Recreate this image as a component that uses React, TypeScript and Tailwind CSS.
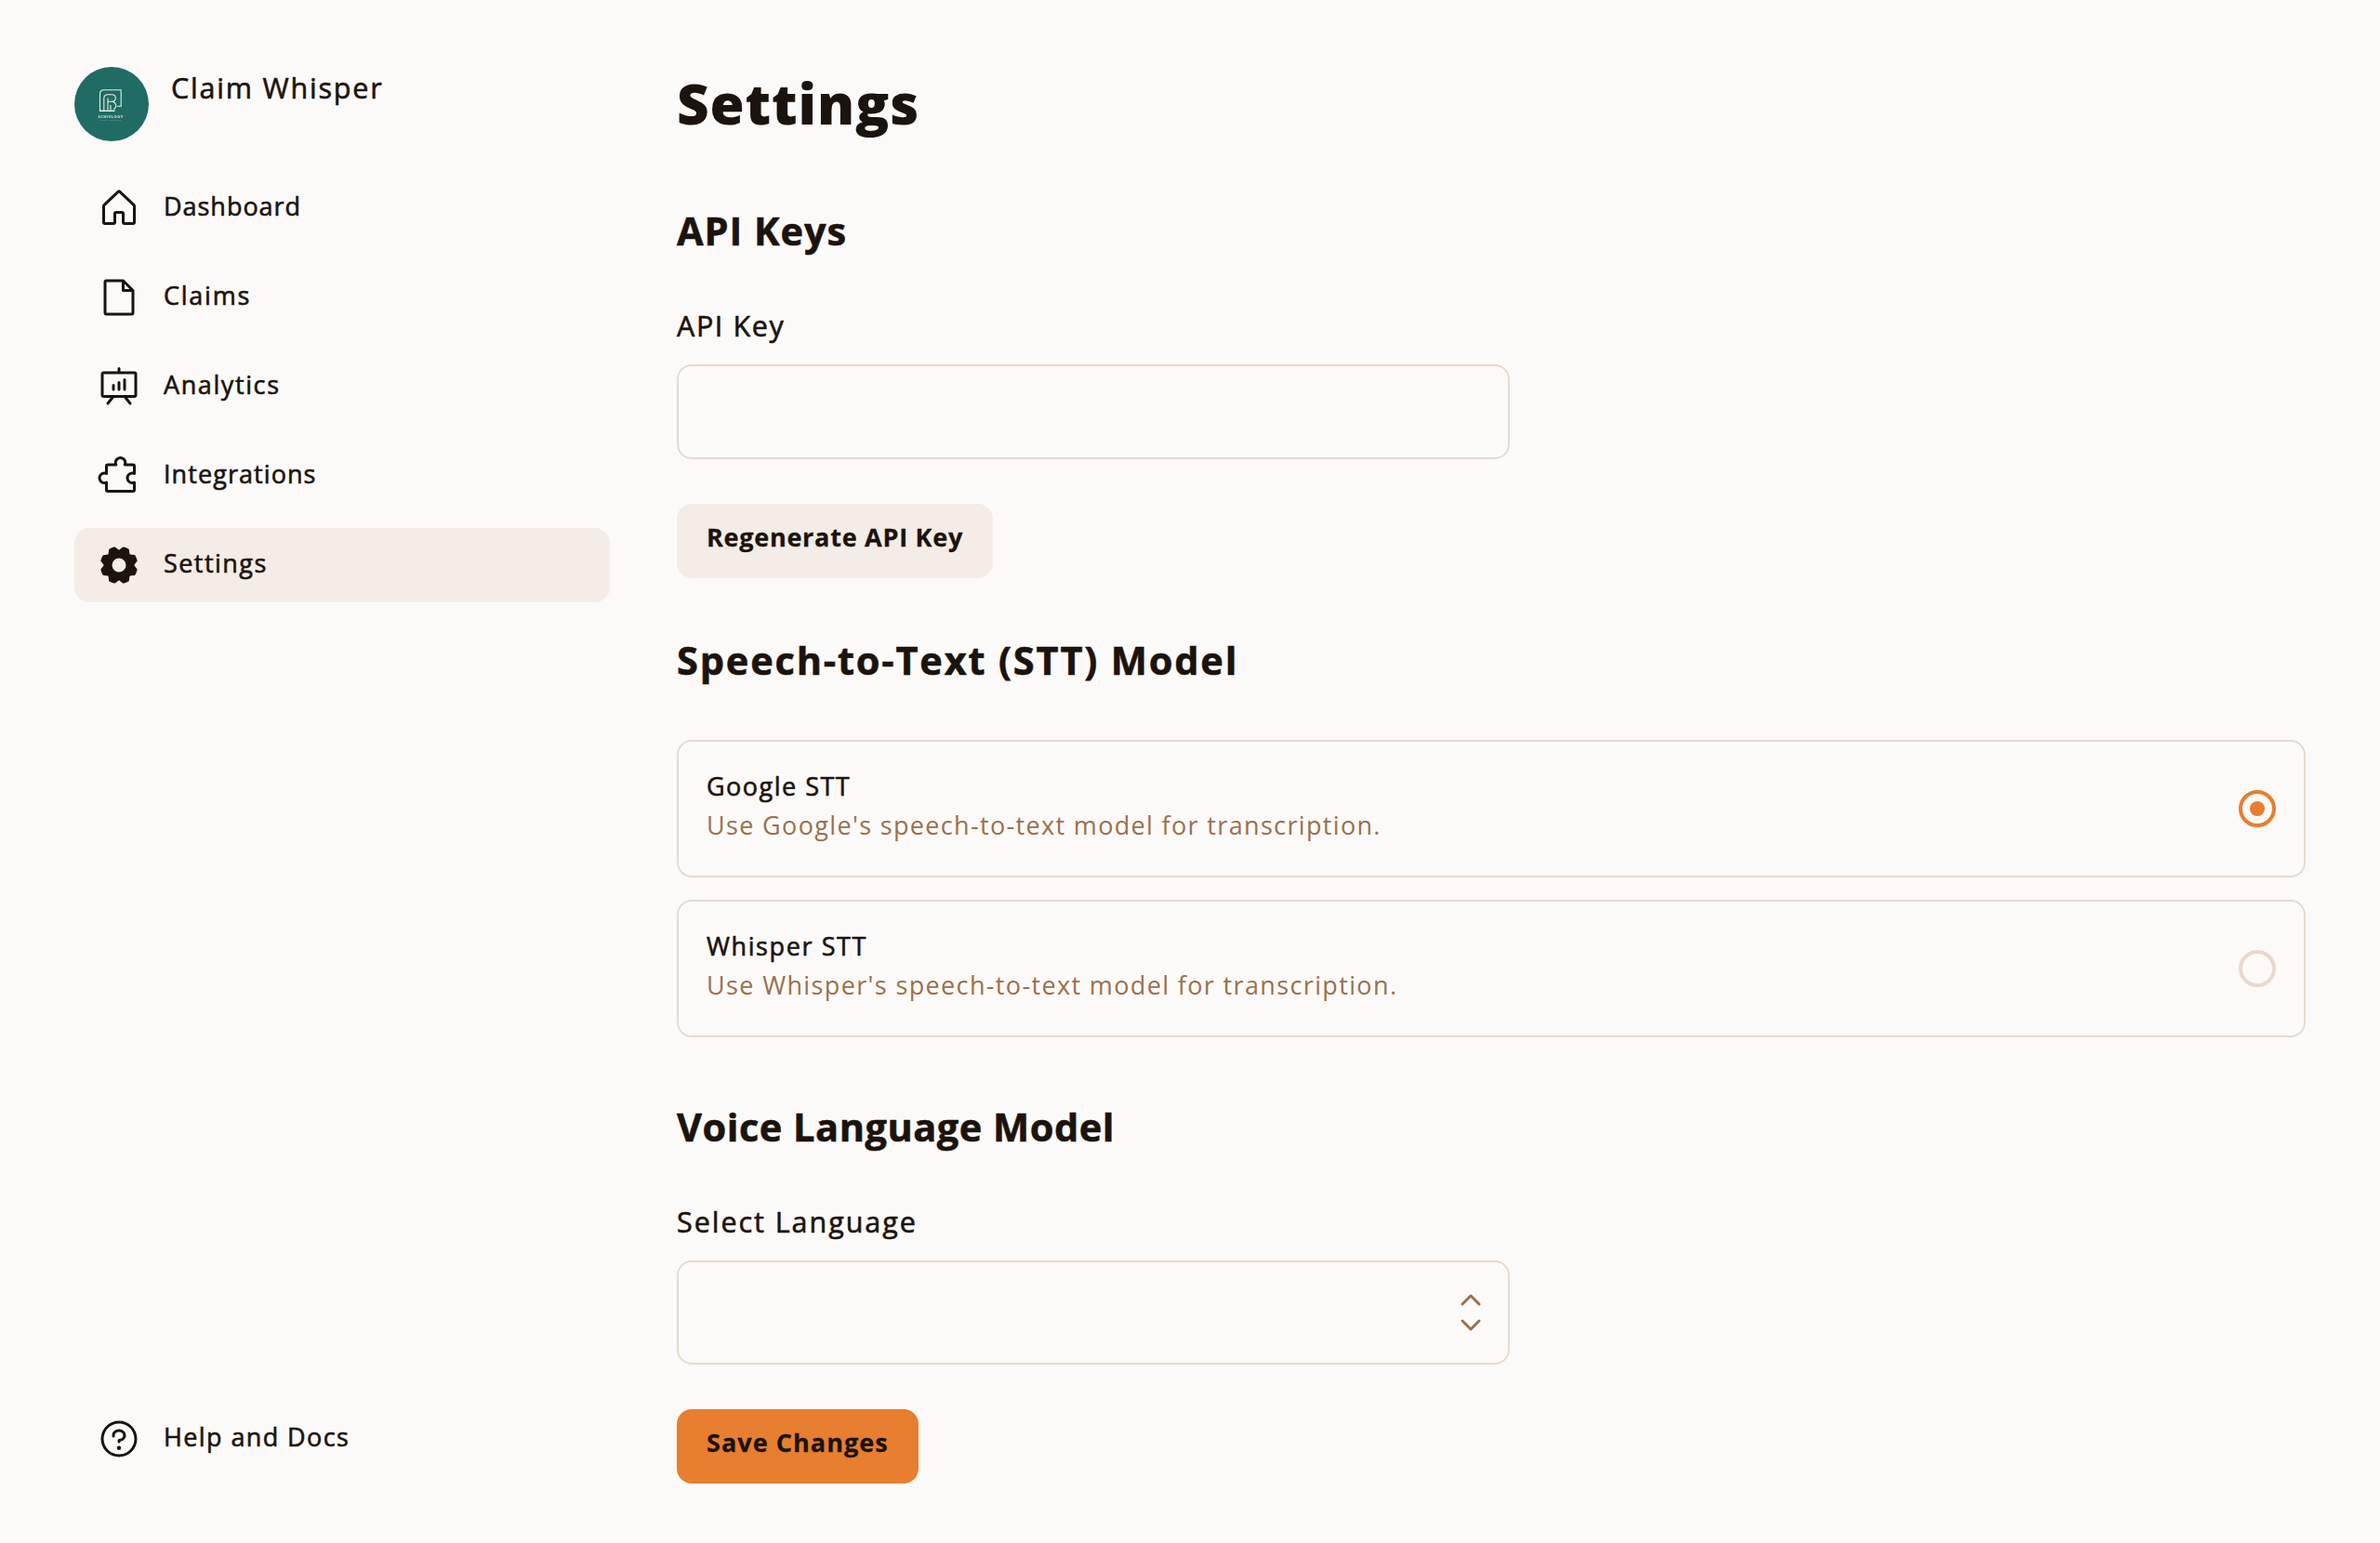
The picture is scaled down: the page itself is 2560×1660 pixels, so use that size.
import type { ReactNode } from "react";

function Icon({ d }: { d: string }) {
  return (
    <svg viewBox="0 0 256 256" fill="currentColor" className="size-12 shrink-0" aria-hidden="true">
      <path d={d} />
    </svg>
  );
}

const icons = {
  house:
    "M218.83,103.77l-80-75.48a1.14,1.14,0,0,1-.11-.11,16,16,0,0,0-21.53,0l-.11.11L37.17,103.77A16,16,0,0,0,32,115.55V208a16,16,0,0,0,16,16H96a16,16,0,0,0,16-16V160h32v48a16,16,0,0,0,16,16h48a16,16,0,0,0,16-16V115.55A16,16,0,0,0,218.83,103.77ZM208,208H160V160a16,16,0,0,0-16-16H112a16,16,0,0,0-16,16v48H48V115.55l.11-.1L128,40l79.9,75.43.11.1Z",
  file: "M213.66,82.34l-56-56A8,8,0,0,0,152,24H56A16,16,0,0,0,40,40V216a16,16,0,0,0,16,16H200a16,16,0,0,0,16-16V88A8,8,0,0,0,213.66,82.34ZM160,51.31,188.69,80H160ZM200,216H56V40h88V88a8,8,0,0,0,8,8h48V216Z",
  chart:
    "M216,40H136V24a8,8,0,0,0-16,0V40H40A16,16,0,0,0,24,56V176a16,16,0,0,0,16,16H79.36L57.75,219a8,8,0,0,0,12.5,10l29.59-37h56.32l29.59,37a8,8,0,1,0,12.5-10l-21.61-27H216a16,16,0,0,0,16-16V56A16,16,0,0,0,216,40Zm0,136H40V56H216V176ZM104,120v24a8,8,0,0,1-16,0V120a8,8,0,0,1,16,0Zm32-16v40a8,8,0,0,1-16,0V104a8,8,0,0,1,16,0Zm32-16v56a8,8,0,0,1-16,0V88a8,8,0,0,1,16,0Z",
  puzzle:
    "M220.27,158.54a8,8,0,0,0-7.7-.46,20,20,0,1,1,0-36.16A8,8,0,0,0,224,114.69V72a16,16,0,0,0-16-16H171.78a35.36,35.36,0,0,0,.22-4,36.11,36.11,0,0,0-11.36-26.24,36,36,0,0,0-60.55,23.62,36.56,36.56,0,0,0,.14,6.62H64A16,16,0,0,0,48,72v32.22a35.36,35.36,0,0,0-4-.22,36.12,36.12,0,0,0-26.24,11.36,35.7,35.7,0,0,0-9.69,27,36.08,36.08,0,0,0,33.31,33.6,35.68,35.68,0,0,0,6.62-.14V208a16,16,0,0,0,16,16H208a16,16,0,0,0,16-16V165.31A8,8,0,0,0,220.27,158.54ZM208,208H64V165.31a8,8,0,0,0-11.43-7.23,20,20,0,1,1,0-36.16A8,8,0,0,0,64,114.69V72h46.69a8,8,0,0,0,7.23-11.43,20,20,0,1,1,36.16,0A8,8,0,0,0,161.31,72H208v32.23a35.68,35.68,0,0,0-6.62-.14A36,36,0,0,0,204,176a35.36,35.36,0,0,0,4-.22Z",
  gear: "M216,130.16q.06-2.16,0-4.32l14.92-18.64a8,8,0,0,0,1.48-7.06,107.6,107.6,0,0,0-10.88-26.25,8,8,0,0,0-6-3.93l-23.72-2.64q-1.48-1.56-3-3L186,40.54a8,8,0,0,0-3.94-6,107.29,107.29,0,0,0-26.25-10.86,8,8,0,0,0-7.06,1.48L130.16,40Q128,40,125.84,40L107.2,25.11a8,8,0,0,0-7.06-1.48A107.6,107.6,0,0,0,73.89,34.51a8,8,0,0,0-3.93,6L67.32,64.27q-1.56,1.49-3,3L40.54,70a8,8,0,0,0-6,3.94,107.71,107.71,0,0,0-10.87,26.25,8,8,0,0,0,1.49,7.06L40,125.84Q40,128,40,130.16L25.11,148.8a8,8,0,0,0-1.48,7.06,107.6,107.6,0,0,0,10.88,26.25,8,8,0,0,0,6,3.93l23.72,2.64q1.49,1.56,3,3L70,215.46a8,8,0,0,0,3.94,6,107.71,107.71,0,0,0,26.25,10.87,8,8,0,0,0,7.06-1.49L125.84,216q2.16.06,4.32,0l18.64,14.92a8,8,0,0,0,7.06,1.48,107.21,107.21,0,0,0,26.25-10.88,8,8,0,0,0,3.93-6l2.64-23.72q1.56-1.48,3-3L215.46,186a8,8,0,0,0,6-3.94,107.71,107.71,0,0,0,10.87-26.25,8,8,0,0,0-1.49-7.06ZM128,168a40,40,0,1,1,40-40A40,40,0,0,1,128,168Z",
  caretUpDown:
    "M181.66,170.34a8,8,0,0,1,0,11.32l-48,48a8,8,0,0,1-11.32,0l-48-48a8,8,0,0,1,11.32-11.32L128,212.69l42.34-42.35A8,8,0,0,1,181.66,170.34Zm-96-84.68L128,43.31l42.34,42.35a8,8,0,0,0,11.32-11.32l-48-48a8,8,0,0,0-11.32,0l-48,48A8,8,0,0,0,85.66,85.66Z",
  question:
    "M140,180a12,12,0,1,1-12-12A12,12,0,0,1,140,180ZM128,72c-22.06,0-40,16.15-40,36v4a8,8,0,0,0,16,0v-4c0-11,10.77-20,24-20s24,9,24,20-10.77,20-24,20a8,8,0,0,0-8,8v8a8,8,0,0,0,16,0v-.72c18.24-3.35,32-17.9,32-35.28C168,88.15,150.06,72,128,72Zm104,56A104,104,0,1,1,128,24,104.11,104.11,0,0,1,232,128Zm-16,0a88,88,0,1,0-88,88A88.1,88.1,0,0,0,216,128Z",
};

function Logo() {
  return (
    <svg viewBox="0 0 80 80" className="size-20 shrink-0 rounded-full bg-[#206b64]" role="img">
      <g fill="none" stroke="#e6f0ea" strokeWidth="1.1">
        <path d="M27.5 47V29.5Q27.5 24.7 32 24.7H50.2V42.3H46" />
        <path d="M27 47.3H43.5" strokeWidth="1.4" />
        <path d="M31.8 46.5V34Q31.8 29.7 36 29.7H40.5Q44.2 29.7 44.2 33.5T40.5 37.3H36" />
        <path d="M36 33.5V46.5M39 41V46.5M41 37.3Q44.8 38.5 44.8 42.5L42.5 46" />
      </g>
      <text x="25.5" y="54.8" textLength="26.5" fill="#dfece6" fontSize="3.8" fontWeight="700" fontFamily="Open Sans, sans-serif">
        SCHIVLOGY
      </text>
      <text x="27.5" y="58.4" textLength="22.5" fill="#8fb8ae" fontSize="2.2" fontFamily="Open Sans, sans-serif">
        CLAIM AI INSURANCE
      </text>
    </svg>
  );
}

function NavItem({ icon, label, tracking, active = false }: { icon: string; label: string; tracking: string; active?: boolean }) {
  return (
    <a className={`flex h-20 items-center gap-6 rounded-2xl px-6 ${active ? "bg-[#f4ece6]" : ""}`}>
      <Icon d={icon} />
      <span className={`pb-1 text-[27px] leading-[42px] font-medium [-webkit-text-stroke:0.6px] ${tracking}`}>{label}</span>
    </a>
  );
}

function Option({ title, text, tracking, textTracking, checked = false }: { title: string; text: string; tracking: string; textTracking: string; checked?: boolean }) {
  return (
    <label className="flex h-[148px] items-center justify-between rounded-2xl border-2 border-[#e7d9cf] px-[30px]">
      <div className="flex flex-col self-start pt-[27px] text-[27px] leading-[42px]">
        <span className={`font-medium [-webkit-text-stroke:0.6px] ${tracking}`}>{title}</span>
        <span className={`text-[#9a704c] ${textTracking}`}>{text}</span>
      </div>
      <span className={`flex size-10 items-center justify-center rounded-full border-4 ${checked ? "border-[#e87e30]" : "border-[#e7d9cf]"}`}>
        {checked && <span className="size-4 rounded-full bg-[#e87e30]" />}
      </span>
    </label>
  );
}

function SectionTitle({ className, children }: { className: string; children: ReactNode }) {
  return <h2 className={`text-[41.5px] leading-[56px] font-bold [-webkit-text-stroke:0.6px] ${className}`}>{children}</h2>;
}

export default function App() {
  return (
    <div className="flex h-[1660px] w-[2560px] gap-[72px] bg-[#fcfaf8] px-20 pt-[72px] font-['Open_Sans',sans-serif] whitespace-nowrap text-[#1b130d]">
      <aside className="flex w-[576px] shrink-0 flex-col justify-between pb-[72px]">
        <div className="flex flex-col gap-8">
          <div className="flex gap-6">
            <Logo />
            <h1 className="text-[30.5px] leading-[45px] font-medium tracking-[1.8px] [-webkit-text-stroke:0.6px]">Claim Whisper</h1>
          </div>
          <nav className="flex flex-col gap-4">
            <NavItem icon={icons.house} label="Dashboard" tracking="tracking-[0.97px]" />
            <NavItem icon={icons.file} label="Claims" tracking="tracking-[1.75px]" />
            <NavItem icon={icons.chart} label="Analytics" tracking="tracking-[1.6px]" />
            <NavItem icon={icons.puzzle} label="Integrations" tracking="tracking-[1.07px]" />
            <NavItem icon={icons.gear} label="Settings" tracking="tracking-[1.45px]" active />
          </nav>
        </div>
        <NavItem icon={icons.question} label="Help and Docs" tracking="tracking-[1.4px]" />
      </aside>

      <main className="flex w-[1752px] flex-col [&>*]:shrink-0">
        <h1 className="h-[78px] text-[60px] leading-[78px] font-extrabold tracking-[0.9px]">Settings</h1>

        <SectionTitle className="mt-[70px] tracking-[0.95px]">API Keys</SectionTitle>
        <p className="mt-[50px] text-[30.5px] leading-[48px] font-medium tracking-[1.6px] [-webkit-text-stroke:0.6px]">API Key</p>
        <input className="mt-[18px] h-[102px] w-[896px] rounded-2xl border-2 border-[#e7d9cf] px-[30px] text-[30.5px]" />
        <button className="mt-12 h-20 w-[340px] rounded-2xl bg-[#f4ece6] px-8 pb-2 text-left text-[27px] font-bold tracking-[0.74px] [-webkit-text-stroke:0.3px]">
          Regenerate API Key
        </button>

        <SectionTitle className="mt-[60px] tracking-[1.83px]">Speech-to-Text (STT) Model</SectionTitle>
        <div className="mt-[58px] flex flex-col gap-6">
          <Option
            title="Google STT"
            text="Use Google's speech-to-text model for transcription."
            tracking="tracking-[1.48px]"
            textTracking="tracking-[1.34px]"
            checked
          />
          <Option
            title="Whisper STT"
            text="Use Whisper's speech-to-text model for transcription."
            tracking="tracking-[1.6px]"
            textTracking="tracking-[1.36px]"
          />
        </div>

        <SectionTitle className="mt-[68px] tracking-[0.52px]">Voice Language Model</SectionTitle>
        <p className="mt-[50px] text-[30.5px] leading-[48px] font-medium tracking-[1.95px] [-webkit-text-stroke:0.6px]">Select Language</p>
        <div className="mt-[18px] flex h-28 w-[896px] items-center justify-end rounded-2xl border-2 border-[#e7d9cf] pr-4 text-[#9a704c]">
          <Icon d={icons.caretUpDown} />
        </div>
        <button className="mt-12 h-20 w-[260px] rounded-2xl bg-[#e87e30] px-8 pb-2 text-left text-[27px] font-bold tracking-[1.05px] [-webkit-text-stroke:0.3px]">
          Save Changes
        </button>
      </main>
    </div>
  );
}
